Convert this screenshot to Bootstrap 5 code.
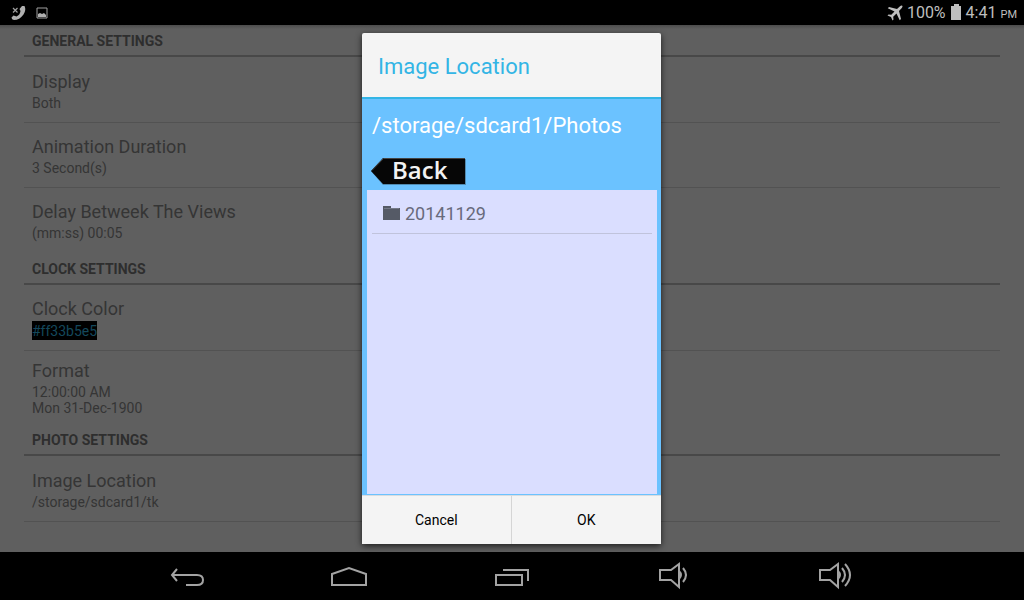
<!DOCTYPE html>
<html lang="en">
<head>
<meta charset="utf-8">
<meta name="viewport" content="width=device-width, initial-scale=1">
<title>Image Location</title>
<link href="https://cdn.jsdelivr.net/npm/bootstrap@5.3.0/dist/css/bootstrap.min.css" rel="stylesheet">
<style>
  body { font-family: Roboto, sans-serif; background: #000; color: #353535; }
  .status-bar { height: 25px; color: #bebebe; font-size: 16px; line-height: 25px; }
  .status-bar small { font-size: 11px; line-height: 1; }
  .status-icons { padding-right: 7px; }
  .screen { background: linear-gradient(#4c4c4c, #5f5f5f 4px); min-height: 0; }
  .group-title { height: 33px; font-size: 14px; line-height: 32px; font-weight: 700; margin: 0; padding-left: 8px; position: relative; color: #2e2e2e; }
  .group-title::after { content: ""; position: absolute; left: 0; right: 0; bottom: 1px; height: 2px; background: #484848; }
  .pref { min-height: 65px; padding: 0 8px; border-bottom: 1px solid #525252; }
  .pref.last-pref { border-bottom-color: transparent; }
  .pref.tall-pref { min-height: 73px; }
  .pref-name { font-size: 18px; line-height: 24px; }
  .pref-value { font-size: 14px; line-height: 16px; padding-top: 1px; }
  .swatch { background: #000; color: #14485c; line-height: 18px; }
  .dialog-layer { padding: 8px 1px 8px 0; }
  .dialog { width: 299px; background: #f4f4f4; border-radius: 2px; box-shadow: 0 2px 6px rgba(0,0,0,.7); }
  .dialog-title { height: 66px; border-bottom: 2px solid #33b5e5; color: #33b5e5; font-size: 22px; line-height: 67px; padding-left: 16px; margin: 0; font-weight: 400; }
  .browser { background: #6bc2ff; padding: 0 4px 1px 5px; min-height: 0; }
  .path { color: #fff; font-size: 22px; line-height: 26px; padding: 14px 5px 18px; }
  .back-btn { width: 95px; height: 28px; margin: 0 4px 5px; background: none; border: 0; padding: 0; }
  .back-btn svg { overflow: visible; }
  .back-btn text { font: 600 24px "Open Sans", sans-serif; fill: #f2f2f2; }
  .files { background: #dadeff; padding: 0 5px; }
  .file-row { height: 44px; border: 0; border-bottom: 1px solid #c0c3dc; background: none; color: #686a7c; font-size: 18px; padding: 3px 0 0 11px; gap: 5px; }
  .dialog-btn { height: 49px; font-size: 14px; color: #000; border: 0; border-top: 1px solid #d8dce0; background: #f4f4f4; }
  .dialog-btn:first-child { border-right: 1px solid #d5d5d5; }
  .nav-keys { height: 48px; padding: 0 108px 0 106px; }
  .nav-keys button { background: none; border: 0; padding: 0; line-height: 1; }
  .nav-keys svg { fill: none; stroke: #a3a3a3; stroke-width: 2; }
</style>
</head>
<body class="vh-100 d-flex flex-column overflow-hidden">
<header class="status-bar d-flex align-items-center flex-shrink-0">
  <svg class="ms-2" width="20" height="20" viewBox="0 0 20 20" aria-hidden="true"><path d="M3.500 14.500L5.500 12.500L8.500 13.500Q12 12 12.500 8L11.500 6L14 3L16.500 3Q18.500 7 15.500 11.500Q11.500 17 6 17Q3.500 16.500 3.500 14.500Z" fill="#b0b0b0"/><path d="M5 5l4.500 4.500m0-4.500l-4.500 4.500" stroke="#a0a0a0" stroke-width="1.200"/></svg>
  <svg class="ms-2" width="12" height="12" viewBox="0 0 12 12" aria-hidden="true"><path d="M1 1h10v10H1z" fill="none" stroke="#a0a0a0"/><path d="M2 10V7l2-1 2 1 2-1 2 2v2z" fill="#b0b0b0"/></svg>
  <div class="status-icons ms-auto d-flex align-items-center">
    <svg width="16" height="16" viewBox="0 0 16 16" aria-hidden="true"><path d="M15.300 .7Q14.300 0 13 1.200L10 4 2 2 .8 3.300 7.500 6.500 4.300 9.800 1.500 9.500.5 10.500 4 12 5.500 15.500 6.500 14.500 6.200 11.700 9.500 8.500 12.700 15.200 14 14 12 6 14.800 3Q16 1.700 15.300.7z" fill="#bebebe"/></svg>
    <span class="ms-1">100%</span>
    <svg class="ms-1" width="12" height="17" viewBox="0 0 12 17" aria-hidden="true"><path d="M4 0h5v2h2v14H1V2h3z" fill="#bebebe"/></svg>
    <span class="ms-1">4:41</span>
    <small class="ms-1 pt-1">PM</small>
  </div>
</header>

<main class="screen flex-fill position-relative">
  <div class="px-4">
    <h2 class="group-title">GENERAL SETTINGS</h2>
    <div class="pref d-flex flex-column justify-content-center"><div class="pref-name">Display</div><div class="pref-value">Both</div></div>
    <div class="pref d-flex flex-column justify-content-center"><div class="pref-name">Animation Duration</div><div class="pref-value">3 Second(s)</div></div>
    <div class="pref last-pref d-flex flex-column justify-content-center"><div class="pref-name">Delay Betweek The Views</div><div class="pref-value">(mm:ss) 00:05</div></div>
    <h2 class="group-title">CLOCK SETTINGS</h2>
    <div class="pref d-flex flex-column justify-content-center"><div class="pref-name">Clock Color</div><div class="pref-value swatch align-self-start px-0">#ff33b5e5</div></div>
    <div class="pref last-pref tall-pref d-flex flex-column justify-content-center"><div class="pref-name">Format</div><div class="pref-value">12:00:00 AM<br>Mon 31-Dec-1900</div></div>
    <h2 class="group-title">PHOTO SETTINGS</h2>
    <div class="pref d-flex flex-column justify-content-center"><div class="pref-name">Image Location</div><div class="pref-value">/storage/sdcard1/tk</div></div>
  </div>

  <div class="dialog-layer position-absolute top-0 start-0 w-100 h-100 d-flex justify-content-center">
    <section class="dialog d-flex flex-column" role="dialog" aria-labelledby="dialogTitle">
      <h1 class="dialog-title flex-shrink-0" id="dialogTitle">Image Location</h1>
      <div class="browser flex-fill d-flex flex-column">
        <div class="path">/storage/sdcard1/Photos</div>
        <button type="button" class="back-btn d-block" aria-label="Back">
          <svg class="d-block" width="95" height="28" viewBox="0 0 95 28"><path d="M0 14L12 2H95V28H12z" fill="#40647c" opacity=".6"/><path d="M0 14L12 1H94V27H12z" fill="#060606"/><path d="M1 13.500L12.500 1.500H94" fill="none" stroke="#444"/><text x="21" y="22">Back</text></svg>
        </button>
        <div class="files flex-fill">
          <button type="button" class="file-row d-flex align-items-center w-100">
            <svg width="17" height="14" viewBox="0 0 17 14" aria-hidden="true"><path d="M0 0h8v2h9v12H0z" fill="#555a66"/><path d="M1 2.500h15" stroke="#747987"/></svg>
            <span>20141129</span>
          </button>
        </div>
      </div>
      <div class="d-flex flex-shrink-0">
        <button type="button" class="dialog-btn w-50">Cancel</button>
        <button type="button" class="dialog-btn w-50">OK</button>
      </div>
    </section>
  </div>
</main>

<nav class="nav-keys d-flex flex-shrink-0 align-items-center" aria-label="System">
  <button type="button" class="flex-fill" aria-label="Back"><svg width="36" height="24" viewBox="0 0 36 24"><path d="M8 5L3 11L8 17M3 11H28Q34 11 34 16T28 21H17"/></svg></button>
  <button type="button" class="flex-fill" aria-label="Home"><svg width="36" height="24" viewBox="0 0 36 24"><path d="M1 21V10L18 4L35 10V21z"/></svg></button>
  <button type="button" class="flex-fill" aria-label="Recent apps"><svg width="36" height="24" viewBox="0 0 36 24"><path d="M3 11h26v10H3zM10 6H35V17"/></svg></button>
  <button type="button" class="flex-fill" aria-label="Volume down"><svg width="36" height="28" viewBox="0 0 36 28"><path d="M5 8H16L24 2V25L16 18H5z"/><path d="M24 9Q28 13 24 17z" fill="#a3a3a3"/><path d="M28 6Q34 13 28 20"/></svg></button>
  <button type="button" class="flex-fill" aria-label="Volume up"><svg width="36" height="28" viewBox="0 0 36 28"><path d="M3 8H13L21 2V25L13 18H3z"/><path d="M21 9Q25 13 21 17z" fill="#a3a3a3"/><path d="M25 6Q31 13 25 20M28 2Q38 13 28 24"/></svg></button>
</nav>
<script src="https://cdn.jsdelivr.net/npm/bootstrap@5.3.0/dist/js/bootstrap.bundle.min.js"></script>
</body>
</html>
